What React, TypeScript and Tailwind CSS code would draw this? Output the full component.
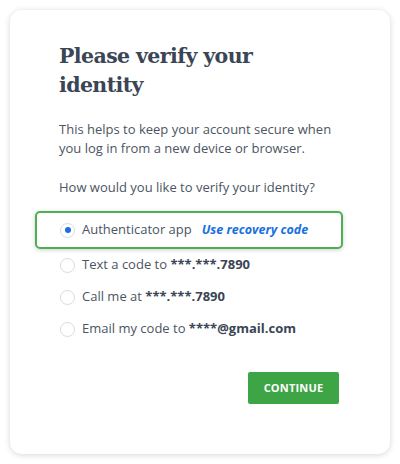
import { useState } from 'react';

const OPTIONS = [
  { id: 'app', label: 'Authenticator app', value: '' },
  { id: 'text', label: 'Text a code to ', value: '***.***.7890' },
  { id: 'call', label: 'Call me at ', value: '***.***.7890' },
  { id: 'email', label: 'Email my code to ', value: '****@gmail.com' },
];

function Radio({ checked }: { checked: boolean }) {
  return (
    <span className="flex h-[15px] w-[15px] shrink-0 items-center justify-center rounded-full border border-[#d5dbe3] bg-white">
      {checked && <span className="h-[6px] w-[6px] rounded-full bg-[#1a6fe0]" />}
    </span>
  );
}

export default function App() {
  const [selected, setSelected] = useState('app');

  return (
    <div className="min-h-screen bg-white p-[10px] font-['Open_Sans',sans-serif]">
      <div className="flex h-[444px] w-[380px] flex-col rounded-xl bg-white pl-[49px] pr-[40px] pt-[32px] shadow-[0_1px_6px_rgba(0,0,0,0.16)]">
        <h1 className="font-['DejaVu_Serif',serif] text-[20.5px] font-bold leading-[29px] tracking-[-0.6px] text-[#3a4555]">
          Please verify your
          <br />
          identity
        </h1>

        <p className="mt-[20px] text-[13px] leading-[19px] text-[#4b5563]">
          This helps to keep your account secure when you log in from a new device or browser.
        </p>

        <p className="mt-[20px] text-[13px] leading-[19px] text-[#4b5563]">
          How would you like to verify your identity?
        </p>

        <div className="-ml-[24px] mt-[14px] flex flex-col">
          {OPTIONS.map((opt) => {
            const active = selected === opt.id;
            return (
              <button
                key={opt.id}
                onClick={() => setSelected(opt.id)}
                className={`flex w-[308px] items-center gap-[7px] rounded-[5px] pl-[23px] text-left text-[13px] text-[#4b5563] ${
                  active
                    ? 'h-[38px] border-2 border-[#4caf50] shadow-[0_1px_4px_rgba(0,0,0,0.2)]'
                    : 'h-[32px] border-2 border-transparent'
                }`}
              >
                <Radio checked={active} />
                <span>
                  {opt.label}
                  {opt.value && <span className="font-bold text-[#3a4555]">{opt.value}</span>}
                </span>
                {opt.id === 'app' && (
                  <span className="ml-[3px] text-[12.5px] font-bold italic text-[#1a6fe0]">Use recovery code</span>
                )}
              </button>
            );
          })}
        </div>

        <div className="mt-[27px] flex justify-end pr-[11px]">
          <button className="h-[32px] w-[91px] rounded-[2px] bg-[#3da546] text-[11px] font-bold tracking-[0.2px] text-white">
            CONTINUE
          </button>
        </div>
      </div>
    </div>
  );
}
